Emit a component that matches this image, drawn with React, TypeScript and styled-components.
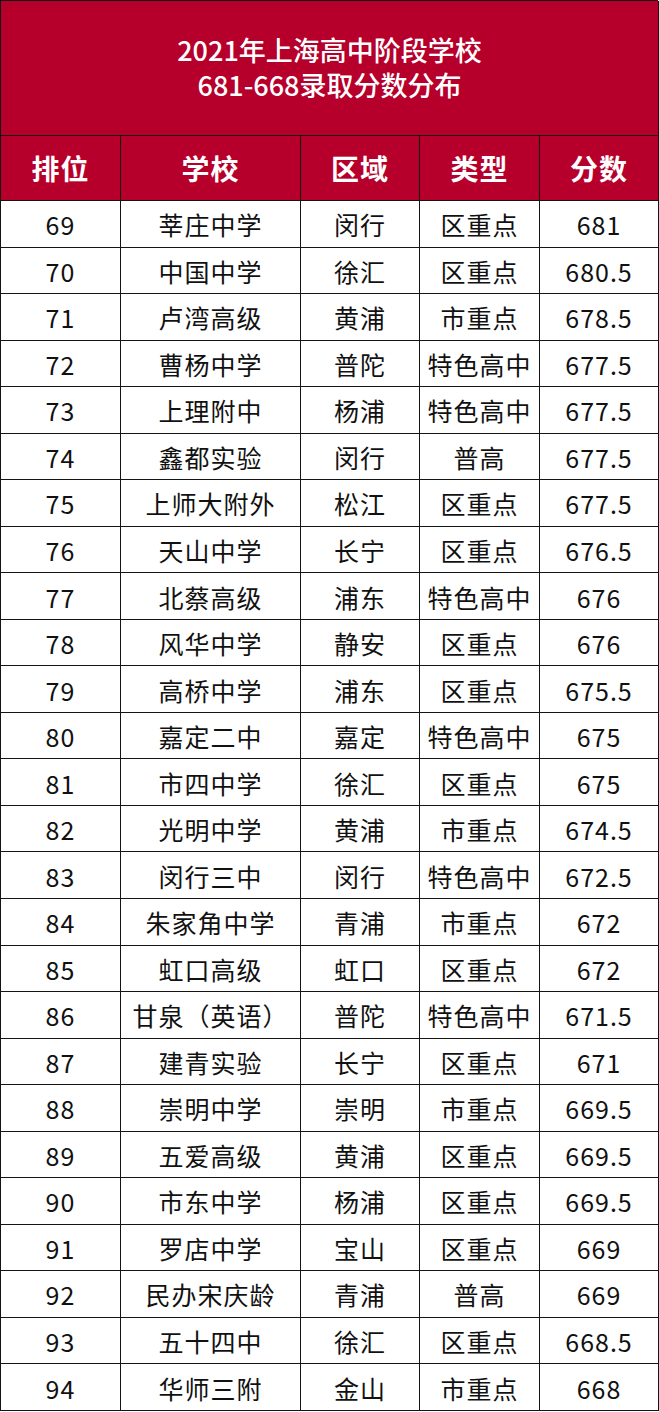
import React from 'react';
import styled, { createGlobalStyle } from 'styled-components';

const GlobalStyle = createGlobalStyle`
  html, body {
    margin: 0;
    padding: 0;
    background: #ffffff;
  }
  body {
    font-family: "Noto Sans CJK SC", "Noto Sans", sans-serif;
  }
  * {
    box-sizing: border-box;
  }
`;

const RED = '#b6002b';
const LINE = '#141414';

const Sheet = styled.div`
  width: 658px;
  display: grid;
  grid-template-columns: 120px 180px 119px 120px 119px;
  grid-template-rows: 135px 65px repeat(26, 46.54px);
  border-top: 1px solid ${LINE};
  border-left: 1px solid ${LINE};
  font-family: "Noto Sans CJK SC", "Noto Sans", sans-serif;
`;

const Title = styled.div`
  grid-column: 1 / -1;
  display: flex;
  flex-direction: column;
  align-items: center;
  justify-content: center;
  gap: 0;
  padding-bottom: 2px;
  background: ${RED};
  color: #fff;
  font-size: 27px;
  font-weight: 500;
  line-height: 35px;
  border-right: 1px solid ${LINE};
  border-bottom: 1px solid ${LINE};
`;

const TitleLine = styled.div`
  height: 35px;
  line-height: 35px;
  overflow: visible;
`;

const Cell = styled.div<{ $head?: boolean }>`
  display: flex;
  align-items: center;
  justify-content: center;
  white-space: nowrap;
  border-right: 1px solid ${LINE};
  border-bottom: 1px solid ${LINE};
  background: ${(p) => (p.$head ? RED : '#fff')};
  color: ${(p) => (p.$head ? '#fff' : '#111')};
  font-size: ${(p) => (p.$head ? '28px' : '25px')};
  font-weight: ${(p) => (p.$head ? 700 : 400)};
  letter-spacing: 1px;
  padding-top: ${(p) => (p.$head ? '0' : '1px')};
`;

const headers = ['排位', '学校', '区域', '类型', '分数'];

const rows: [string, string, string, string, string][] = [
  ['69', '莘庄中学', '闵行', '区重点', '681'],
  ['70', '中国中学', '徐汇', '区重点', '680.5'],
  ['71', '卢湾高级', '黄浦', '市重点', '678.5'],
  ['72', '曹杨中学', '普陀', '特色高中', '677.5'],
  ['73', '上理附中', '杨浦', '特色高中', '677.5'],
  ['74', '鑫都实验', '闵行', '普高', '677.5'],
  ['75', '上师大附外', '松江', '区重点', '677.5'],
  ['76', '天山中学', '长宁', '区重点', '676.5'],
  ['77', '北蔡高级', '浦东', '特色高中', '676'],
  ['78', '风华中学', '静安', '区重点', '676'],
  ['79', '高桥中学', '浦东', '区重点', '675.5'],
  ['80', '嘉定二中', '嘉定', '特色高中', '675'],
  ['81', '市四中学', '徐汇', '区重点', '675'],
  ['82', '光明中学', '黄浦', '市重点', '674.5'],
  ['83', '闵行三中', '闵行', '特色高中', '672.5'],
  ['84', '朱家角中学', '青浦', '市重点', '672'],
  ['85', '虹口高级', '虹口', '区重点', '672'],
  ['86', '甘泉（英语）', '普陀', '特色高中', '671.5'],
  ['87', '建青实验', '长宁', '区重点', '671'],
  ['88', '崇明中学', '崇明', '市重点', '669.5'],
  ['89', '五爱高级', '黄浦', '区重点', '669.5'],
  ['90', '市东中学', '杨浦', '区重点', '669.5'],
  ['91', '罗店中学', '宝山', '区重点', '669'],
  ['92', '民办宋庆龄', '青浦', '普高', '669'],
  ['93', '五十四中', '徐汇', '区重点', '668.5'],
  ['94', '华师三附', '金山', '市重点', '668'],
];

const App: React.FC = () => {
  return (
    <>
      <GlobalStyle />
      <Sheet>
        <Title>
          <TitleLine>2021年上海高中阶段学校</TitleLine>
          <TitleLine>681-668录取分数分布</TitleLine>
        </Title>
        {headers.map((h) => (
          <Cell key={h} $head>
            {h}
          </Cell>
        ))}
        {rows.map((r) =>
          r.map((v, i) => <Cell key={`${r[0]}-${i}`}>{v}</Cell>)
        )}
      </Sheet>
    </>
  );
};

export default App;
